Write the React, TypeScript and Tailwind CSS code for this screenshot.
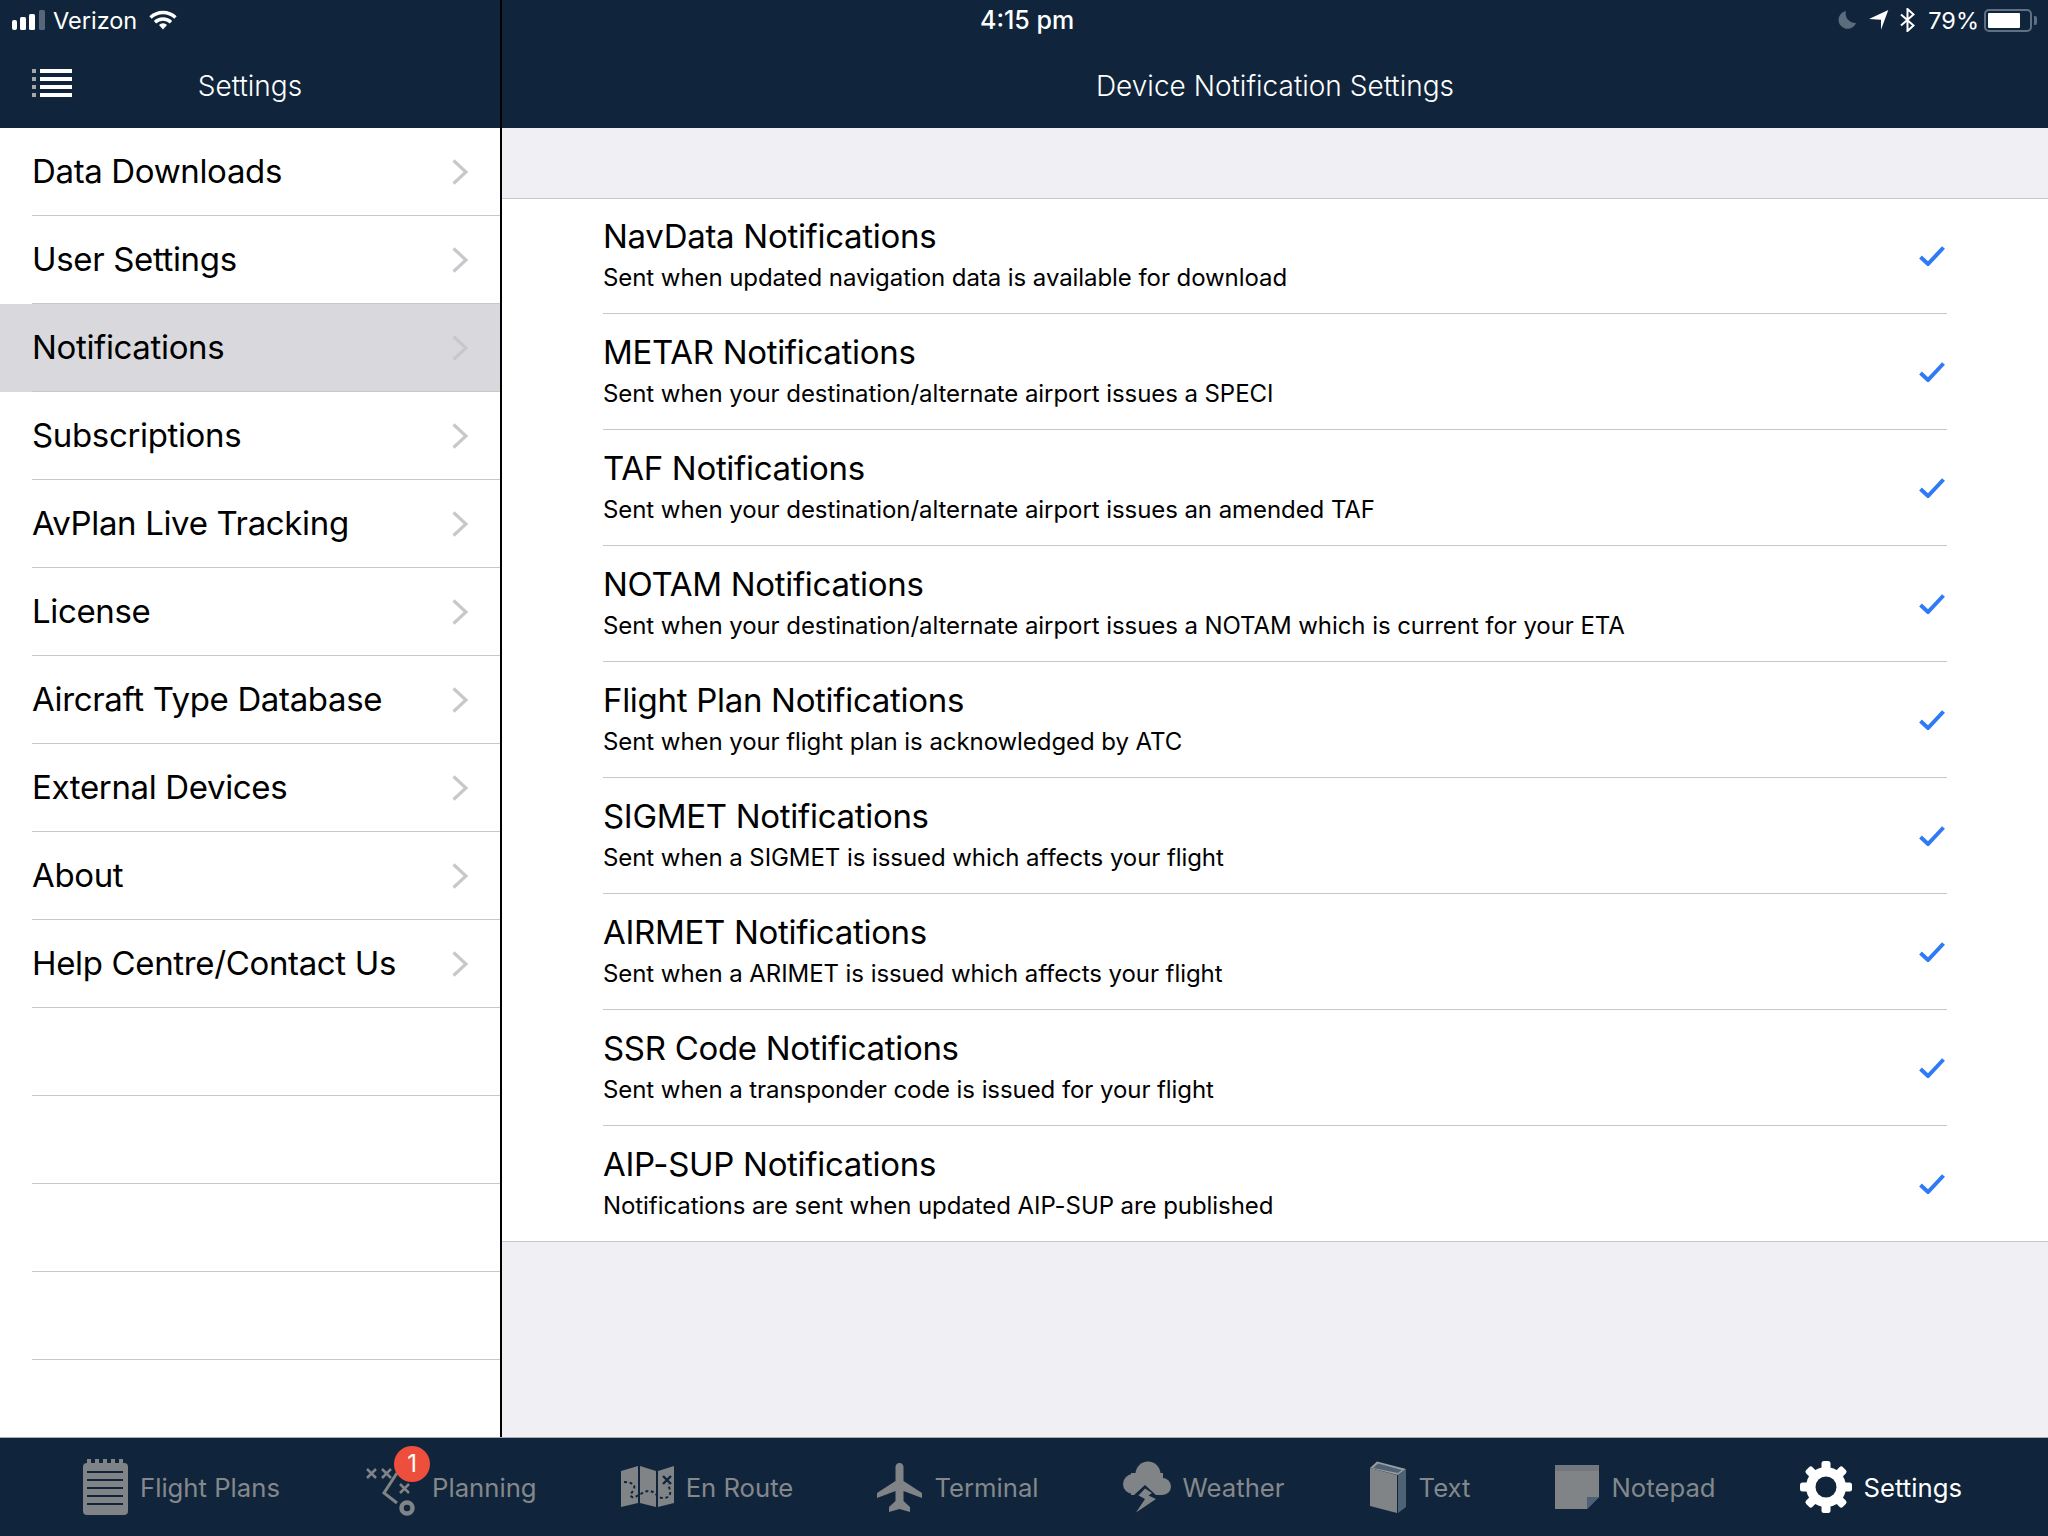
import type { ReactNode } from "react";

const MENU = [
  "Data Downloads",
  "User Settings",
  "Notifications",
  "Subscriptions",
  "AvPlan Live Tracking",
  "License",
  "Aircraft Type Database",
  "External Devices",
  "About",
  "Help Centre/Contact Us",
];

const NOTIFICATIONS = [
  ["NavData Notifications", "Sent when updated navigation data is available for download"],
  ["METAR Notifications", "Sent when your destination/alternate airport issues a SPECI"],
  ["TAF Notifications", "Sent when your destination/alternate airport issues an amended TAF"],
  ["NOTAM Notifications", "Sent when your destination/alternate airport issues a NOTAM which is current for your ETA"],
  ["Flight Plan Notifications", "Sent when your flight plan is acknowledged by ATC"],
  ["SIGMET Notifications", "Sent when a SIGMET is issued which affects your flight"],
  ["AIRMET Notifications", "Sent when a ARIMET is issued which affects your flight"],
  ["SSR Code Notifications", "Sent when a transponder code is issued for your flight"],
  ["AIP-SUP Notifications", "Notifications are sent when updated AIP-SUP are published"],
];

const GRAY = "#808487";
const NAVY = "#10253b";
const SLATE = "#4e6276";

function Signal() {
  return (
    <svg width="33" height="20" viewBox="0 0 33 20">
      <rect x="0" y="10" width="5" height="10" rx="2" fill="#fff" />
      <rect x="8" y="7" width="6" height="13" rx="1.5" fill="#fff" />
      <rect x="17" y="4" width="6" height="16" rx="1.5" fill="#fff" />
      <rect x="27" y="0" width="6" height="20" rx="1.5" fill="#56677a" />
    </svg>
  );
}

function Wifi() {
  return (
    <svg width="28" height="20" viewBox="0 0 28 20" fill="none" stroke="#fff" strokeWidth="3.4">
      <path d="M1.5 7.5A18 18 0 0 1 26.5 7.5" />
      <path d="M6 12.2A11.5 11.5 0 0 1 22 12.2" />
      <path d="M10 15A5.5 5.5 0 0 1 18 15L14 19.5Z" fill="#fff" stroke="none" />
    </svg>
  );
}

function MenuGlyph() {
  return (
    <svg width="40" height="28" viewBox="0 0 40 28">
      {[0, 8, 16, 24].map((y) => (
        <g key={y}>
          <rect x="0" y={y} width="4" height="4" fill="#a3a8ad" />
          <rect x="8" y={y} width="32" height="4" fill="#fff" />
        </g>
      ))}
    </svg>
  );
}

function Chevron() {
  return (
    <svg width="16" height="26" viewBox="0 0 16 26" fill="none" stroke="#c7c7cc" strokeWidth="3.2">
      <path d="M1.5 1.5L14 13L1.5 24.5" />
    </svg>
  );
}

function Check() {
  return (
    <svg className="mr-[2px]" width="26" height="20" viewBox="0 0 26 20" fill="none" stroke="#2f7bf6" strokeWidth="4">
      <path d="M1.5 11L9 18L24.5 1.5" />
    </svg>
  );
}

function FlightPlansIcon() {
  return (
    <svg width="45" height="56" viewBox="0 0 45 56">
      {[4, 12, 20, 28, 36].map((x) => (
        <rect key={x} x={x} y="0" width="4" height="6" fill={GRAY} />
      ))}
      <rect x="0" y="4" width="45" height="52" rx="4" fill={GRAY} />
      {[12, 20, 28, 36, 44].map((y) => (
        <rect key={y} x="4" y={y} width="36" height="2" fill={NAVY} />
      ))}
    </svg>
  );
}

function PlanningIcon() {
  return (
    <svg width="56" height="59" viewBox="-2 -9 56 59" fill="none" stroke={GRAY} strokeWidth="2.5">
      <path d="M1 2L10 11M10 2L1 11M16 2L25 11M25 2L16 11M34 17L43 26M43 17L34 26" />
      <path d="M31 6L18 26L31 36" strokeWidth="3" />
      <circle cx="41" cy="41" r="5.5" strokeWidth="4.5" />
    </svg>
  );
}

function MapIcon() {
  return (
    <svg width="53" height="42" viewBox="0 0 53 42">
      <path d="M0 5L17 0V37L0 41Z M19 0L35 5V41L19 37Z M37 5L53 0V37L37 41Z" fill={GRAY} />
      <path
        d="M3 16C9 16 15 18 13 23C11 27 8 29 11 31C15 33 22 24 29 25C35 26 36 32 42 32C48 32 50 29 49 24L47 18"
        fill="none"
        stroke={NAVY}
        strokeWidth="2"
        strokeDasharray="3 2.5"
      />
      <path d="M42 10L50 18M50 10L42 18" stroke={NAVY} strokeWidth="2.4" />
    </svg>
  );
}

function PlaneIcon() {
  return (
    <svg width="45" height="49" viewBox="0 0 45 49">
      <path
        d="M22.5 0C25 0 26.5 2 26.5 4V18L45 30V35L26.5 28V38L33 44V49L22.5 46L12 49V44L18.5 38V28L0 35V30L18.5 18V4C18.5 2 20 0 22.5 0Z"
        fill={GRAY}
      />
    </svg>
  );
}

function WeatherIcon() {
  return (
    <svg width="48" height="52" viewBox="0 0 48 52">
      <circle cx="25" cy="13" r="12.5" fill={GRAY} />
      <circle cx="10" cy="23" r="10" fill={GRAY} />
      <circle cx="39.5" cy="25.5" r="8.5" fill={GRAY} />
      <rect x="8" y="12" width="32" height="22" fill={GRAY} />
      <path d="M10 35L22 24L34 35Z" fill={NAVY} />
      <path d="M22 27.5L15.5 34.5L22 38L13 51.5L33 38L25.5 34.5L29 32Z" fill={GRAY} />
    </svg>
  );
}

function BookIcon() {
  return (
    <svg width="38" height="54" viewBox="0 0 38 54">
      <path d="M1 8L8 1.5L37 9L29 15Z" fill="#9a9da0" />
      <path d="M4 8L9 3.5L33 10L29 13Z" fill={SLATE} />
      <path d="M29 15L37 9V47L29 53Z" fill={SLATE} />
      <path d="M1 8L28 15V53L1 46Z" fill={GRAY} />
    </svg>
  );
}

function NotepadIcon() {
  return (
    <svg width="45" height="45" viewBox="0 0 45 45">
      <path d="M0 0H44V32L32 44H0Z" fill={GRAY} />
      <rect x="0" y="0" width="44" height="6" fill="#72787e" />
      <path d="M32 32H44L32 44Z" fill={SLATE} />
    </svg>
  );
}

function GearIcon() {
  return (
    <svg width="52" height="52" viewBox="0 0 52 52">
      <circle cx="26" cy="26" r="20" fill="#fff" />
      {[0, 45, 90, 135, 180, 225, 270, 315].map((deg) => (
        <rect key={deg} x="21.5" y="0" width="9" height="12" rx="2.5" fill="#fff" transform={`rotate(${deg} 26 26)`} />
      ))}
      <circle cx="26" cy="26" r="10.5" fill={NAVY} />
    </svg>
  );
}

function Tab({ icon, label, active, badge }: { icon: ReactNode; label: string; active?: boolean; badge?: string }) {
  return (
    <div className="flex items-center gap-3">
      <div className="relative flex">
        {icon}
        {badge && (
          <div className="absolute left-[30px] top-[-12px] flex h-9 w-9 items-center justify-center rounded-full bg-[#ee4f3d] text-[24px] text-white">
            {badge}
          </div>
        )}
      </div>
      <span className={active ? "pt-[2px] text-[25.7px] text-white" : "pt-[2px] text-[25.7px] text-[#85888b]"}>{label}</span>
    </div>
  );
}

export default function App() {
  return (
    <div className="flex h-[1536px] w-[2048px] flex-col overflow-hidden bg-white font-[Inter,sans-serif] antialiased">
      <div className="flex min-h-0 flex-1">
        {/* Sidebar */}
        <aside className="flex w-[502px] shrink-0 flex-col border-r-2 border-black">
          <div className="h-[128px] shrink-0 bg-[#10253b] text-white">
            <div className="flex h-10 items-center pl-3">
              <Signal />
              <span className="ml-2 pt-[2px] text-[23.5px]">Verizon</span>
              <span className="ml-3 flex">
                <Wifi />
              </span>
            </div>
            <div className="relative flex h-[88px] items-center justify-center pt-[4px]">
              <span className="absolute left-8 top-[29px] flex">
                <MenuGlyph />
              </span>
              <span className="text-[28px] font-light">Settings</span>
            </div>
          </div>
          <div className="flex-1">
            {MENU.map((item) => (
              <div key={item} className={item === "Notifications" ? "bg-[#d9d9dd]" : ""}>
                <div className="ml-8 flex h-[88px] items-center justify-between border-b border-[#c8c7cc] pr-8 text-[33px] tracking-[-0.35px] text-black">
                  <span>{item}</span>
                  <Chevron />
                </div>
              </div>
            ))}
            {[0, 1, 2, 3].map((i) => (
              <div key={i} className="ml-8 h-[88px] border-b border-[#c8c7cc]" />
            ))}
          </div>
        </aside>

        {/* Detail */}
        <main className="flex min-w-0 flex-1 flex-col bg-[#efeff4]">
          <div className="h-[128px] shrink-0 bg-[#10253b] text-white">
            <div className="flex h-10 items-center justify-between pl-[478px] pr-[11px]">
              <span className="pt-[2px] text-[25px] font-medium">4:15 pm</span>
              <div className="flex items-center">
                <svg width="18" height="18" viewBox="0 0 18 18">
                  <path d="M8 0A9 9 0 1 0 18 12A9.5 9.5 0 0 1 8 0Z" fill="#5a6c7e" />
                </svg>
                <svg className="ml-[13px]" width="20" height="20" viewBox="0 0 20 20">
                  <path d="M19.3 0L0 9L12 9.7V19.7Z" fill="#fff" />
                </svg>
                <svg className="ml-[11px]" width="15" height="24" viewBox="0 0 15 24" fill="none" stroke="#fff" strokeWidth="2">
                  <path d="M1 6.5L13.5 17.5L7.5 23V1L13.5 6.5L1 17.5" />
                </svg>
                <span className="ml-[13px] pt-[2px] text-[23.5px]">79%</span>
                <div className="ml-[5px] flex h-[23px] w-[48px] rounded-[5px] border-2 border-[#5f7082] p-[2px]">
                  <div className="h-full w-[32px] rounded-[1px] bg-white" />
                </div>
                <div className="ml-[2px] h-[9px] w-[3px] rounded-r-[2px] bg-[#5f7082]" />
              </div>
            </div>
            <div className="flex h-[88px] items-center justify-center pt-[4px]">
              <span className="text-[28px] font-light">Device Notification Settings</span>
            </div>
          </div>

          <div className="mt-[70px] border-y border-[#c8c7cc] bg-white">
            {NOTIFICATIONS.map(([title, detail], i) => (
              <div key={title} className="pl-[101px] pr-[101px]">
                <div
                  className={
                    i === NOTIFICATIONS.length - 1
                      ? "flex h-[115px] items-center justify-between"
                      : i === 0
                        ? "flex h-[115px] items-center justify-between border-b border-[#c8c7cc]"
                        : "flex h-[116px] items-center justify-between border-b border-[#c8c7cc]"
                  }
                >
                  <div className="pb-[3px]">
                    <div className="text-[33px] leading-[40px] tracking-[-0.3px] text-black">{title}</div>
                    <div className="mt-[7px] text-[24px] leading-[30px] tracking-[-0.07px] text-black">{detail}</div>
                  </div>
                  <Check />
                </div>
              </div>
            ))}
          </div>
        </main>
      </div>

      {/* Tab bar */}
      <nav className="flex h-[99px] shrink-0 items-center justify-between border-t border-[#a9adb1] bg-[#10253b] pl-[83px] pr-[86px]">
        <Tab icon={<FlightPlansIcon />} label="Flight Plans" />
        <Tab icon={<PlanningIcon />} label="Planning" badge="1" />
        <Tab icon={<MapIcon />} label="En Route" />
        <Tab icon={<PlaneIcon />} label="Terminal" />
        <Tab icon={<WeatherIcon />} label="Weather" />
        <Tab icon={<BookIcon />} label="Text" />
        <Tab icon={<NotepadIcon />} label="Notepad" />
        <Tab icon={<GearIcon />} label="Settings" active />
      </nav>
    </div>
  );
}
